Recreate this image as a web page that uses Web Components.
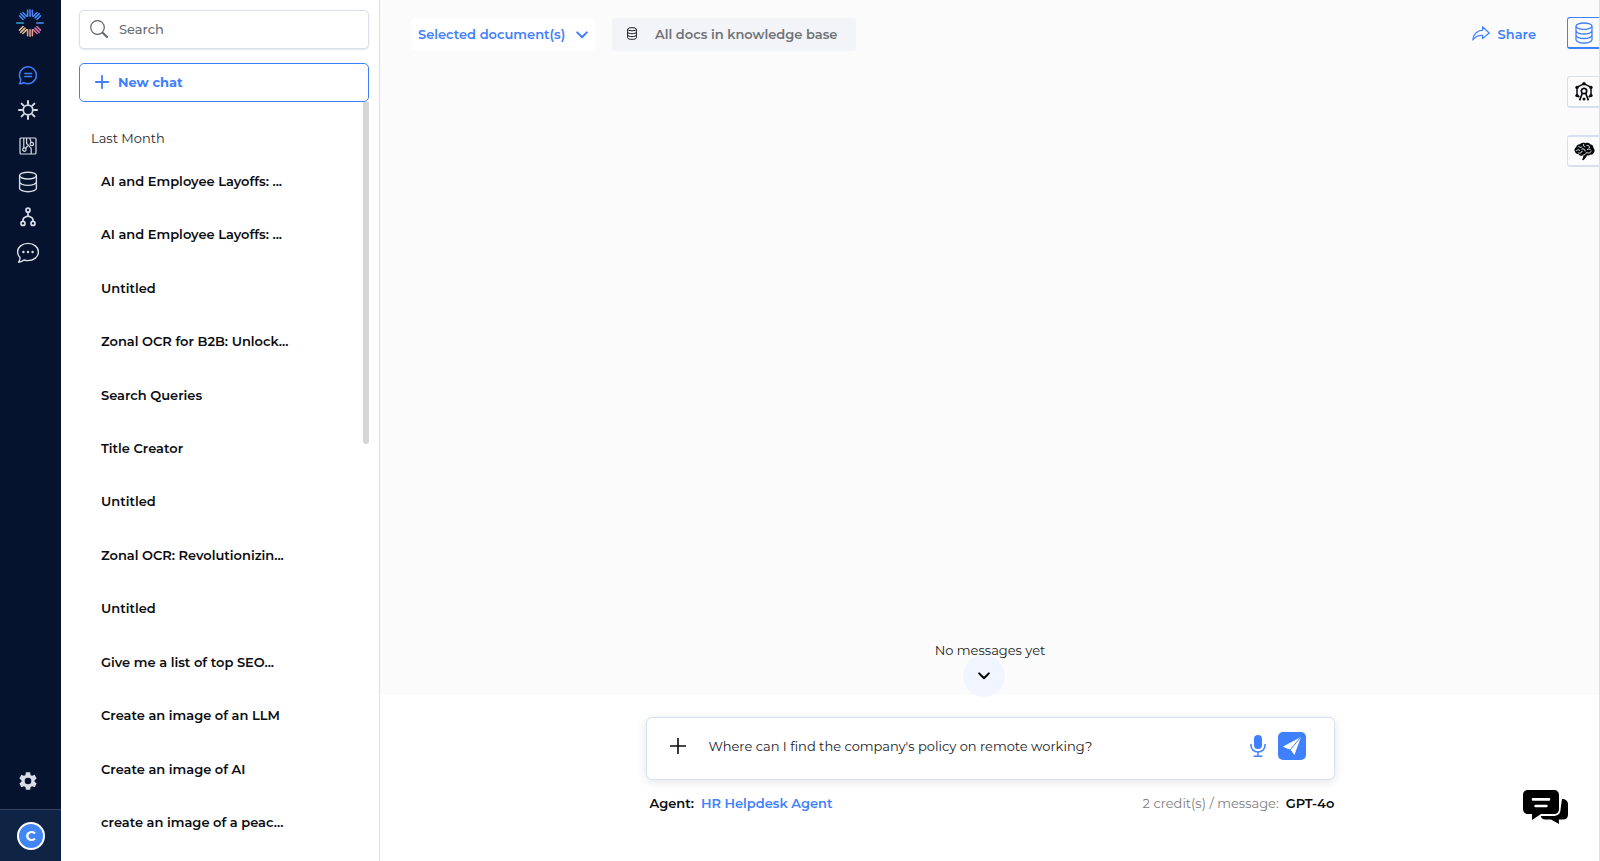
<!DOCTYPE html>
<html lang="en">
<head>
<meta charset="utf-8">
<title>Chat</title>
<style>
  html, body { margin: 0; min-height: 100vh; }
  body {
    font-family: Montserrat, Inter, "Liberation Sans", sans-serif;
    font-size: 13px;
    line-height: 20px;
    color: #0b0c10;
    --blue: #3f80ff;
    --navy: #05132f;
    --line: #d9e0ed;
  }
</style>
</head>
<body>
<chat-app></chat-app>

<script>
const define = (name, css, html) => {
  const template = document.createElement('template');
  template.innerHTML = `<style>
    *, *::before, *::after { box-sizing: border-box; }
    button, input, select { font: inherit; color: inherit; margin: 0; padding: 0; border: 0; background: none; outline: none; }
    button, select { cursor: pointer; }
    a { color: inherit; text-decoration: none; }
    svg { display: block; flex: none; }
    ${css}</style>${html}`;
  customElements.define(name, class extends HTMLElement {
    constructor() {
      super();
      this.attachShadow({ mode: 'open' }).append(template.content.cloneNode(true));
    }
  });
};

define('brand-mark', `:host { display: block; }`, `
  <svg width="28" height="28" viewBox="0 0 28 28" fill="none" stroke-width="1.6" stroke-linecap="round" aria-hidden="true">
    <path stroke="#4a84f5" d="M14 .8v6.400M11.600 1.200v6M16.400 1.200v6"/>
    <path stroke="#4a84f5" transform="rotate(45 14 14)" d="M14 .8v6M11.600 1.600v5M16.400 1.600v5"/>
    <path stroke="#4f8cf0" transform="rotate(90 14 14)" d="M14 .8v6.400"/>
    <path stroke="#d46aa0" transform="rotate(135 14 14)" d="M14 .8v6M11.600 1.600v5M16.400 1.600v5"/>
    <path stroke="#e8a08c" transform="rotate(180 14 14)" d="M14 .8v6.400M11.600 1.200v6M16.400 1.200v6"/>
    <path stroke="#e6bd8e" transform="rotate(225 14 14)" d="M14 .8v6M11.600 1.600v5M16.400 1.600v5"/>
    <path stroke="#33a6d8" transform="rotate(270 14 14)" d="M14 .8v6.400"/>
    <path stroke="#4585ee" transform="rotate(315 14 14)" d="M14 .8v6M11.600 1.600v5M16.400 1.600v5"/>
  </svg>`);

define('nav-rail', `
  :host { display: flex; flex-direction: column; width: 61px; background: var(--navy); color: #d7dce6; }
  header { padding: 9px 0 0 16px; height: 57px; }
  nav { display: grid; grid-auto-rows: 1fr; height: 214px; width: 55px; }
  a { display: grid; place-items: center; }
  a[aria-current] { color: var(--blue); }
  .settings { width: 55px; margin-top: auto; height: 56px; display: grid; place-items: center; }
  footer { display: grid; place-items: center; height: 52px; background: #0f2344; border-top: 1px solid #34435f; }
  .avatar { width: 28px; height: 28px; border-radius: 50%; border: 2px solid #fff; background: #4285f4; color: #fff; font-size: 14px; font-weight: 700; line-height: 24px; }
`, `
  <header><brand-mark></brand-mark></header>
  <nav aria-label="Main">
    <a href="#chat" aria-label="Chat" aria-current="page"><svg width="20" height="20" viewBox="0 0 20 20" fill="none" stroke="currentColor" stroke-width="1.500" stroke-linecap="round" stroke-linejoin="round"><path d="M2.600 14.400A8.400 8.400 0 1 1 5.800 17.600C4.600 18.400 3 18.800 1.400 18.800c1-1.200 1.400-2.800 1.200-4.400z"/><path d="M6.800 8.600h6.800M6.800 11.600h6.800"/></svg></a>
    <a href="#models" aria-label="Models"><svg width="20" height="20" viewBox="0 0 20 20" fill="none" stroke="currentColor" stroke-width="1.800" stroke-linecap="round"><circle cx="10" cy="10" r="4.800"/><path stroke-width="2" d="M10 1v3M10 16v3M1 10h3M16 10h3M3.600 3.600l2 2M14.400 14.400l2 2M3.600 16.400l2-2M14.400 5.600l2-2"/></svg></a>
    <a href="#flows" aria-label="Circuits"><svg width="18" height="18" viewBox="0 0 18 18" fill="none" stroke="currentColor" stroke-width="1.200"><rect x="1" y="1" width="16" height="16" rx="1"/><circle cx="5.400" cy="12.600" r="1.700"/><circle cx="12.800" cy="7" r="1.700"/><path d="M4.800 11V1M7.600 1v5.400l4.600 5v5.600M6.600 11.400L8.600 9M10.600 1l1.600 4.400"/></svg></a>
    <a href="#data" aria-label="Knowledge base"><svg width="20" height="22" viewBox="0 0 20 22" fill="none" stroke="currentColor" stroke-width="1.400"><ellipse cx="10" cy="4.600" rx="8.400" ry="3.400"/><path d="M1.600 4.600v12.600c0 1.900 3.700 3.600 8.400 3.600s8.400-1.700 8.400-3.600V4.600M1.600 10.800c0 1.900 3.700 3.600 8.400 3.600s8.400-1.700 8.400-3.600"/></svg></a>
    <a href="#agents" aria-label="Agents"><svg width="16" height="20" viewBox="0 0 16 20" fill="none" stroke="currentColor" stroke-width="1.700"><circle cx="8" cy="3.200" r="2"/><circle cx="3" cy="16.400" r="2"/><circle cx="13" cy="16.400" r="2"/><path d="M8 5.200v4M3 14.400v-1.600c0-1.600 1-2.200 2-2.600L8 9l3 1.200c1 .4 2 1 2 2.600v1.600"/></svg></a>
    <a href="#messages" aria-label="Messages"><svg width="24" height="22" viewBox="0 0 24 22" fill="none" stroke="currentColor" stroke-width="1.400" stroke-linejoin="round"><path d="M4 15.600A9 9 0 0 1 1.600 10C1.600 5.200 6.200 1.400 12 1.400S22.400 5.200 22.400 10 17.800 18.600 12 18.600c-1.400 0-2.800-.2-4-.6-1.400 1.400-3.400 2-5.400 2.200 1-1.400 1.600-3 1.400-4.600z"/><g fill="currentColor" stroke="none"><circle cx="7.400" cy="10" r="1.200"/><circle cx="12" cy="10" r="1.200"/><circle cx="16.600" cy="10" r="1.200"/></g></svg></a>
  </nav>
  <button class="settings" aria-label="Settings"><svg width="22" height="22" viewBox="0 0 24 24" fill="currentColor"><path d="M19.140 12.940c.04-.3.060-.61.060-.94s-.02-.64-.07-.94l2.030-1.580a.49.49 0 0 0 .12-.61l-1.920-3.320a.49.49 0 0 0-.59-.22l-2.390.96a7 7 0 0 0-1.620-.94l-.36-2.540a.48.48 0 0 0-.48-.41h-3.840a.48.48 0 0 0-.47.41l-.36 2.540c-.59.24-1.130.57-1.620.94l-2.390-.96a.48.48 0 0 0-.59.22L2.740 8.870a.48.48 0 0 0 .12.610l2.030 1.580a7 7 0 0 0 0 1.880l-2.030 1.580a.49.49 0 0 0-.12.610l1.920 3.320c.12.220.37.290.59.220l2.390-.96c.5.380 1.030.7 1.620.94l.36 2.540c.05.240.24.410.48.410h3.840c.24 0 .44-.17.470-.41l.36-2.540a7 7 0 0 0 1.620-.94l2.390.96c.22.080.47 0 .59-.22l1.920-3.320a.48.48 0 0 0-.12-.61zM12 15.600a3.600 3.600 0 1 1 0-7.200 3.600 3.600 0 0 1 0 7.200z"/></svg></button>
  <footer><button class="avatar" aria-label="Account">C</button></footer>`);

define('search-box', `
  :host { display: block; }
  label { display: flex; align-items: center; gap: 11px; height: 39px; padding: 0 10px 2px; border: 1px solid var(--line); border-radius: 5px; box-shadow: 0 1px 2px #1c2b4a1f; background: #fff; color: #5f6368; }
  input { flex: 1; min-width: 0; font-weight: 500; }
  input::placeholder { color: #6a6d72; opacity: 1; }
`, `
  <label><svg width="18" height="18" viewBox="0 0 18 18" fill="none" stroke="currentColor" stroke-linecap="round"><circle cx="7.500" cy="7.500" r="6.800" stroke-width="1.200"/><path stroke-width="2" d="M13 13l4 4"/></svg><input type="search" placeholder="Search" aria-label="Search"></label>`);

define('chat-item', `
  :host { display: grid; align-items: center; font-weight: 600; color: #0b0c10; }
  a { width: 200px; white-space: nowrap; }
`, `<a href="#thread"><slot></slot></a>`);

define('chat-sidebar', `
  :host { display: flex; flex-direction: column; width: 319px; background: #fff; padding: 10px 10px 0 18px; border-right: 1px solid var(--line); }
  .new { display: flex; align-items: center; gap: 9px; flex: none; height: 39px; margin-top: 14px; padding: 0 15px 2px; border: 1px solid var(--blue); border-radius: 5px; color: var(--blue); font-weight: 700; }
  .scroll { flex: 1; position: relative; display: flex; flex-direction: column; padding: 26px 0 12px 12px; }
  .thumb { position: absolute; right: 0; top: 0; width: 6px; height: 45%; border-radius: 0 0 3px 3px; background: #d6d6d6; }
  h2 { margin: 0 0 6px; font-size: 13px; font-weight: 400; color: #26282d; }
  .items { flex: 1; display: grid; grid-auto-rows: 1fr; padding-left: 10px; }
`, `
  <search-box></search-box>
  <button class="new"><svg width="14" height="14" viewBox="0 0 14 14" stroke="currentColor" stroke-width="1.800" stroke-linecap="round"><path d="M7 .8v12.400M.8 7h12.400"/></svg>New chat</button>
  <div class="scroll">
    <h2>Last Month</h2>
    <div class="items"><slot></slot></div>
    <div class="thumb"></div>
  </div>`);

define('top-bar', `
  :host { display: flex; align-items: center; padding: 18px 64px 0 31px; font-weight: 600; }
  .picker { position: relative; display: flex; align-items: center; height: 33px; width: 184px; border-radius: 5px; background: #fff; color: var(--blue); }
  select { appearance: none; width: 100%; height: 33px; padding: 0 0 2px 7px; }
  .picker svg { position: absolute; right: 7px; pointer-events: none; }
  .chip { display: flex; align-items: center; height: 33px; width: 244px; margin-left: 17px; padding: 0 0 2px 15px; gap: 18px; border-radius: 3px; background: #f2f4f8; color: #6f7277; }
  .chip svg { color: #222; }
  .share { display: flex; align-items: center; gap: 8px; margin-left: auto; padding-bottom: 2px; color: var(--blue); }
`, `
  <div class="picker"><select aria-label="Documents"><option>Selected document(s)</option></select><svg width="12" height="8" viewBox="0 0 12 8" fill="none" stroke="currentColor" stroke-width="2" stroke-linecap="round" stroke-linejoin="round"><path d="M1.200 1.400L6 6.200l4.800-4.800"/></svg></div>
  <button class="chip"><svg width="10" height="13" viewBox="0 0 10 13" fill="none" stroke="currentColor"><ellipse cx="5" cy="2.200" rx="4.400" ry="1.600"/><path d="M.6 2.200v8.600c0 .9 2 1.600 4.400 1.600s4.400-.7 4.400-1.600V2.200M.6 5.100c0 .9 2 1.600 4.400 1.600s4.400-.7 4.400-1.600M.6 8c0 .9 2 1.600 4.400 1.600S9.400 8.900 9.400 8"/></svg>All docs in knowledge base</button>
  <button class="share"><svg width="18" height="15" viewBox="0 0 18 15" fill="none" stroke="currentColor" stroke-width="1.200" stroke-linejoin="round"><path d="M10.600.8L17.200 7l-6.600 5.600V9.400C6.400 9.200 3.200 10.600.8 14 1 8.600 5 4.600 10.600 4.200z"/></svg>Share</button>`);

define('tool-tabs', `
  :host { position: absolute; right: 0; top: 17px; display: grid; gap: 27px; }
  button { width: 33px; height: 32px; display: grid; place-items: center; background: #fcfcfd; border: 1px solid var(--line); border-right: 0; border-bottom-width: 2px; border-radius: 3px 0 0 3px; }
  .on { color: var(--blue); border-color: var(--blue); }
  .last { border-top-width: 2px; }
`, `
  <button class="on" aria-label="Documents"><svg width="18" height="22" viewBox="0 0 18 22" fill="none" stroke="currentColor" stroke-width="1.300"><ellipse cx="9" cy="4.200" rx="8" ry="3.200"/><path d="M1 4.200v13.600C1 19.600 4.600 21 9 21s8-1.400 8-3.200V4.200M1 8.800C1 10.600 4.600 12 9 12s8-1.400 8-3.200M1 13.300c0 1.800 3.600 3.200 8 3.200s8-1.400 8-3.200"/></svg></button>
  <button aria-label="Agent"><svg width="18" height="19" viewBox="0 0 18 19" fill="none" stroke="currentColor"><path stroke-width="1.500" d="M4.400 15L2 13.600V5.200L9 1.800l7 3.400v8.400L13.600 15"/><circle cx="9" cy="9" r="2.700" stroke-width="1.700"/><path stroke-width="1.700" d="M7.400 11L4.600 18.400M10.600 11l2.800 7.400"/><g fill="currentColor" stroke="none"><circle cx="9" cy="1.800" r="1.700"/><circle cx="2" cy="5.400" r="1.700"/><circle cx="16" cy="5.400" r="1.700"/><circle cx="2" cy="13.600" r="1.700"/><circle cx="16" cy="13.600" r="1.700"/><circle cx="9" cy="17" r="1.500"/></g></svg></button>
  <button class="last" aria-label="Memory"><svg width="21" height="19" viewBox="0 0 21 19"><path fill="#050608" d="M1 9.600C-.2 8 .8 5.800 2.200 5.200 2.400 3.200 4.400 2 6 2.200 7.400.6 10 .4 11.400 1.200 13.200.4 15.600 1 16.600 2.600c1.800.2 3 1.800 2.800 3.400 1.400 1 1.600 3.400.4 4.800-.6 1.400-2 2-3.200 1.800-1.200.8-2.400 1-3.600.8-.8 1.800-2 3.400-3.800 4.800l-1.200-.8c1.200-1.200 1.400-2.600 1-3.800-1.800.4-3.400 0-4.200-1.400C3 12.200 1.200 11.400 1 9.600z"/><path fill="none" stroke="#fcfcfd" stroke-width=".9" stroke-linecap="round" d="M2.400 8.600c1-1.400 2.600-1 3.400-.2M4.800 4.400c.6 1.400 2.400 1.400 3.200.4M9.600 2.400c-.6 1.400.4 2.200 1.400 2.400M7.800 7c1.800-.6 3.600.4 3.400 2M13 3.400c1.600-.4 2.800.8 2.400 2.200M13.200 7.600c1-1.200 3-.8 3.600.4M13.600 10.800c1.400.6 3 0 3.400-1.200M4.600 11c1.600.6 3.400-.4 3.600-1.800M9 13.200c1.600 0 3.200-1.200 3.400-2.600"/></svg></button>`);

define('message-list', `
  :host { flex: 1; position: relative; display: flex; flex-direction: column; background: #fbfbfb; }
  p { margin: auto 0 35px; text-align: center; color: #1c1e22; }
  .down { position: absolute; left: calc(50% - 27px); bottom: -2px; width: 42px; height: 42px; border-radius: 50%; background: #f0f5ff; display: grid; place-items: center; color: #000; }
`, `
  <top-bar></top-bar>
  <p>No messages yet</p>
  <button class="down" aria-label="Scroll to bottom"><svg width="12" height="8" viewBox="0 0 12 8" fill="none" stroke="currentColor" stroke-width="2" stroke-linecap="round" stroke-linejoin="round"><path d="M1.200 1.400L6 6.200l4.800-4.800"/></svg></button>`);

define('message-composer', `
  :host { display: block; width: 100%; max-width: 689px; margin: 0 auto; padding: 22px 0 48px; }
  form { display: flex; align-items: center; height: 63px; padding: 0 28px 5px 23px; border: 1px solid var(--line); border-radius: 6px; background: #fff; box-shadow: 0 2px 10px #1c2b4a1f; }
  input { flex: 1; min-width: 0; margin-left: 23px; color: #202227; }
  .mic { color: var(--blue); margin-right: 12px; }
  .send { display: grid; place-items: center; width: 28px; height: 28px; border-radius: 5px; background: var(--blue); color: #fff; }
  .meta { display: flex; gap: 7px; margin-top: 13px; padding-left: 4px; font-weight: 600; }
  .meta a { color: var(--blue); }
  .cost { margin-left: auto; font-weight: 400; color: #7c7e83; }
`, `
  <form onsubmit="return false">
    <button type="button" aria-label="Attach"><svg width="16" height="16" viewBox="0 0 16 16" stroke="currentColor" stroke-width="1.600"><path d="M8 0v16M0 8h16"/></svg></button>
    <input type="text" value="Where can I find the company's policy on remote working?" aria-label="Message">
    <button type="button" class="mic" aria-label="Dictate"><svg width="16" height="22" viewBox="0 0 16 22" fill="none" stroke="currentColor"><rect x="4" y="0" width="8" height="14" rx="4" fill="currentColor" stroke="none"/><path stroke-width="1.500" d="M1 9v1.600c0 3.600 3 6.400 7 6.400s7-2.800 7-6.400V9M8 17v4M3.600 21.200h8.800"/></svg></button>
    <button class="send" aria-label="Send"><svg width="20" height="20" viewBox="0 0 20 20"><path fill="currentColor" d="M1 10.400L19 1l-6.600 18-4-5.400-3.600-1z"/><path fill="none" stroke="#3f80ff" stroke-width="1" d="M18.600 1.400L8.400 13.600v3"/></svg></button>
  </form>
  <div class="meta"><span>Agent:</span><a href="#agent">HR Helpdesk Agent</a><span class="cost">2 credit(s) / message:</span><span>GPT-4o</span></div>`);

define('help-bubble', `
  :host { position: absolute; right: 32px; bottom: 36px; }
  button { display: block; }
`, `
  <button aria-label="Help chat"><svg width="45" height="36" viewBox="0 0 45 36"><path d="M39 10c3.400 0 6 2 6 5v11c0 2.600-2 4.400-5 4.600h-4.200L36 35l-8-4.400h-6c-2.400 0-3.800-1.400-4.200-3.600H30c5 0 7.600-2.400 7.600-7z"/><path d="M5 1h26c3 0 5 2 5 5v14c0 3-2 5-5 5H18l-9 6v-6H5c-3 0-5-2-5-5V6c0-3 2-5 5-5z"/><path stroke="#fff" stroke-width="2.600" stroke-linecap="round" d="M10 10.400h16M12.600 17h10.800"/></svg></button>`);

define('chat-main', `
  :host { flex: 1; min-width: 0; position: relative; display: flex; flex-direction: column; background: #fff; }
  :host::after { content: ""; position: absolute; right: 0; top: 0; bottom: 0; width: 1px; background: var(--line); }
`, `
  <message-list></message-list>
  <message-composer></message-composer>
  <tool-tabs></tool-tabs>
  <help-bubble></help-bubble>`);

define('chat-app', `
  :host { display: flex; min-height: 100vh; }
`, `
  <nav-rail></nav-rail>
  <chat-sidebar>
    <chat-item>AI and Employee Layoffs: ...</chat-item>
    <chat-item>AI and Employee Layoffs: ...</chat-item>
    <chat-item>Untitled</chat-item>
    <chat-item>Zonal OCR for B2B: Unlock...</chat-item>
    <chat-item>Search Queries</chat-item>
    <chat-item>Title Creator</chat-item>
    <chat-item>Untitled</chat-item>
    <chat-item>Zonal OCR: Revolutionizin...</chat-item>
    <chat-item>Untitled</chat-item>
    <chat-item>Give me a list of top SEO...</chat-item>
    <chat-item>Create an image of an LLM</chat-item>
    <chat-item>Create an image of AI</chat-item>
    <chat-item>create an image of a peac...</chat-item>
  </chat-sidebar>
  <chat-main></chat-main>`);
</script>
</body>
</html>
